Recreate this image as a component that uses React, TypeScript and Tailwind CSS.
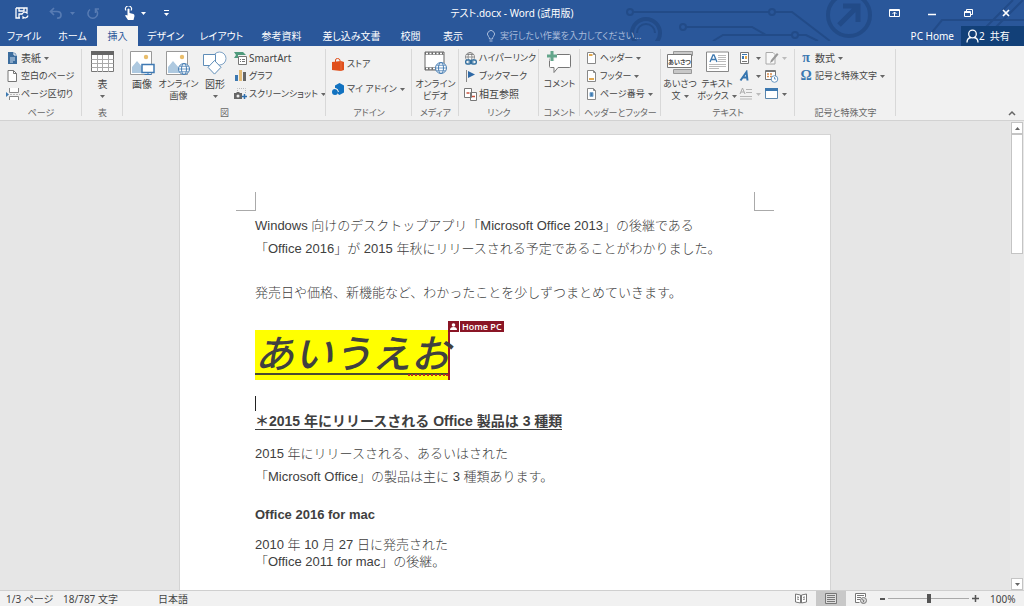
import React from "react";

type Kids = { children?: React.ReactNode };

const Caret = ({ tone = "text-[#666]" }: { tone?: string }) => (
  <svg className={`inline-block shrink-0 ${tone}`} width="5" height="3" viewBox="0 0 5 3" aria-hidden="true">
    <path d="M0 0h5L2.5 3z" fill="currentColor" />
  </svg>
);

const Icon = ({ w, h, children }: Kids & { w: number; h: number }) => (
  <svg className="shrink-0" width={w} height={h} viewBox={`0 0 ${w} ${h}`} fill="none" aria-hidden="true">
    {children}
  </svg>
);

/* ---------- ribbon drawings ---------- */

const CoverIcon = () => (
  <Icon w={12} h={12}>
    <path d="M2 0h6l3 3v9H2z" fill="#3c6d9e" />
    <path d="M8 0v3h3" stroke="#fff" />
    <path d="M4 6h5M4 8h5M4 10h3" stroke="#cfe0f0" />
  </Icon>
);
const BlankIcon = () => (
  <Icon w={12} h={12}>
    <path d="M2 .5h5.5l3 3v8H2z" fill="#fff" stroke="#777" />
    <path d="M7.500 .5v3h3" stroke="#777" />
  </Icon>
);
const BreakIcon = () => (
  <Icon w={14} h={12}>
    <path d="M3.500 0v4.500h9V0M3.500 12V8.500h9V12" fill="#fff" stroke="#888" />
    <path d="M4 6.500h10" stroke="#bbb" strokeDasharray="2 1" />
    <path d="M0 4l3 2.500L0 9z" fill="#3c78b0" />
  </Icon>
);
const TableIcon = () => (
  <Icon w={24} h={22}>
    <path d="M.5 .5h22v20H.5z" fill="#fff" stroke="#777" />
    <path d="M0 0h23v4H0z" fill="#666" />
    <path d="M.5 8.500h22M.5 12.500h22M.5 16.500h22M6.500 4v17M11.500 4v17M17.500 4v17" stroke="#aaa" />
  </Icon>
);
const Photo = () => (
  <>
    <path d="M.5 .5h21v23H.5z" fill="#fff" stroke="#999" />
    <circle cx="16" cy="6" r="2.200" fill="#e9bd6b" />
    <path d="M2 22v-6l5-6 6 7 2-1v6z" fill="#aec9e0" />
  </>
);
const Globe = ({ x, y, r = 5.5 }: { x: number; y: number; r?: number }) => (
  <g stroke="#4a80b5" fill="none">
    <circle cx={x} cy={y} r={r} fill="#fff" />
    <ellipse cx={x} cy={y} rx={r / 2.2} ry={r} />
    <path d={`M${x - r} ${y}h${2 * r}M${x - r + 1} ${y - r / 2}h${2 * r - 2}M${x - r + 1} ${y + r / 2}h${2 * r - 2}`} strokeWidth=".8" />
  </g>
);
const PictureIcon = () => (
  <Icon w={25} h={24}>
    <Photo />
    <path d="M12 13.500h12v8H12z" fill="#fff" stroke="#3f79b3" strokeWidth="1.500" />
    <path d="M18 22v1.500M14.500 23.500h7" stroke="#3f79b3" />
  </Icon>
);
const OnlinePictureIcon = () => (
  <Icon w={25} h={24}>
    <Photo />
    <Globe x={18} y={18} />
  </Icon>
);
const ShapesIcon = () => (
  <Icon w={24} h={24}>
    <circle cx="16.500" cy="7.500" r="6.500" fill="#fff" stroke="#7fa3c6" />
    <path d="M.5 3.500h12v11H.5z" fill="#fff" stroke="#5f8db8" />
    <path d="M11.500 9.500l6.500 6.800-6.500 6.800L5 16.300z" fill="#fff" stroke="#5f8db8" />
  </Icon>
);
const SmartArtIcon = () => (
  <Icon w={14} h={13}>
    <path d="M0 0h9l3 3H4v3H0l2-3z" fill="#4f9a7c" />
    <path d="M4.500 4.500h8v8h-8z" fill="#fff" stroke="#777" />
    <path d="M6 7.500h1M8 7.500h3M6 9.500h1M8 9.500h3" stroke="#777" />
  </Icon>
);
const ChartIcon = () => (
  <Icon w={14} h={12}>
    <path d="M1 5h3v6H1z" fill="#3c78b0" />
    <path d="M5 0h3v11H5z" fill="#e3bb76" />
    <path d="M9 2h3v9H9z" fill="#666" />
  </Icon>
);
const ScreenshotIcon = () => (
  <Icon w={14} h={12}>
    <path d="M3.500 3V.5h8V6" stroke="#bbb" strokeDasharray="1 1" />
    <path d="M0 5h2l1-1h2l1 1h2v6H0z" fill="#666" />
    <circle cx="4" cy="8" r="1.500" fill="#eee" />
    <path d="M10.500 6v5M8 8.500h5" stroke="#2f6fae" strokeWidth="1.500" />
  </Icon>
);
const StoreIcon = () => (
  <Icon w={12} h={13}>
    <path d="M0 4l9-1 3 1v8l-3 1-9-1z" fill="#e04f1b" />
    <path d="M3.500 4V2q0-1.500 2-1.500T8 2v1.500" stroke="#e04f1b" />
    <path d="M9 3v10" stroke="#f08458" strokeWidth=".6" />
  </Icon>
);
const AddinIcon = () => (
  <Icon w={12} h={13}>
    <path d="M3 2.500L7.500 0 12 2.500v7L7.500 12 6 11V6.500L3 5z" fill="#1272c0" />
    <circle cx="3" cy="9" r="3" fill="#1272c0" />
    <path d="M3 5.500q3 0 3.500 3.500" stroke="#f1f1f1" />
  </Icon>
);
const VideoIcon = () => (
  <Icon w={24} h={24}>
    <path d="M1 1h19v18H1z" fill="#fff" stroke="#666" strokeWidth="1" />
    <path d="M1 2.500h19M1 17.500h19" stroke="#666" strokeWidth="2.500" />
    <path d="M2 2.500h18M2 17.500h18" stroke="#fff" strokeWidth="1.500" strokeDasharray="2 1.500" />
    <Globe x={17} y={17} />
  </Icon>
);
const LinkIcon = () => (
  <Icon w={14} h={13}>
    <g stroke="#777" strokeWidth=".8">
      <circle cx="6" cy="5" r="4.500" fill="#fff" />
      <ellipse cx="6" cy="5" rx="2" ry="4.500" />
      <path d="M1.500 5h9M2.500 2.500h7" />
    </g>
    <rect x="1.700" y="8" width="5" height="4" rx="1.500" fill="#f1f1f1" stroke="#336f9f" strokeWidth="1.400" />
    <rect x="7.300" y="8" width="5" height="4" rx="1.500" fill="#f1f1f1" stroke="#336f9f" strokeWidth="1.400" />
    <path d="M4.500 10h5" stroke="#336f9f" strokeWidth="1.400" />
  </Icon>
);
const BookmarkIcon = () => (
  <Icon w={14} h={12}>
    <path d="M2.500 0v12" stroke="#888" />
    <path d="M4 1l7 3.500L4 8z" fill="#2f69a6" />
  </Icon>
);
const CrossRefIcon = () => (
  <Icon w={14} h={13}>
    <path d="M.5 .5h7v9h-7zM6.500 4.500h6v8h-6z" fill="#fff" stroke="#777" />
    <path d="M2.500 5h3M8 8.500h3" stroke="#c9523c" strokeWidth="1.500" />
  </Icon>
);
const CommentIcon = () => (
  <Icon w={25} h={24}>
    <path d="M2.500 4.500q0-1 1-1h19q1 0 1 1v11q0 1-1 1H11l-4 5v-5H3.500q-1 0-1-1z" fill="#fff" stroke="#777" />
    <path d="M5 0v10M0 5h10" stroke="#f1f1f1" strokeWidth="5" />
    <path d="M5 0v10M0 5h10" stroke="#63a58b" strokeWidth="3" />
  </Icon>
);
const HeaderIcon = ({ kind }: { kind: "head" | "foot" | "num" }) => (
  <Icon w={10} h={12}>
    <path d="M.5 .5h6l2 2v9h-8z" fill="#fff" stroke="#888" />
    <path d="M6.500 .5v2h2" stroke="#888" />
    {kind === "head" && <path d="M2 3h3.500" stroke="#e3a94f" strokeWidth="2" />}
    {kind === "foot" && <path d="M2 9h5" stroke="#e3a94f" strokeWidth="2" />}
    {kind === "num" && <path d="M3 4.500h3v4H3z" fill="#3c78b0" stroke="#7ba6cc" />}
  </Icon>
);
const GreetingIcon = () => (
  <svg className="shrink-0" width="26" height="24" viewBox="0 0 26 24" fill="none" aria-hidden="true">
    <path d="M6.500 .5h19v4h-19zM6.500 18.500h18v4h-18z" fill="#c8c8c8" stroke="#999" />
    <path d="M.5 3.500h24v13H.5z" fill="#fff" stroke="#777" />
    <text x="12.500" y="12.500" textAnchor="middle" fontSize="6" fontWeight="bold" fill="#444" fontFamily="Noto Sans CJK JP, sans-serif">
      あいさつ
    </text>
  </svg>
);
const TextBoxIcon = () => (
  <Icon w={23} h={22}>
    <path d="M.5 1h22v19.500H.5z" fill="#fff" stroke="#888" />
    <path d="M4 11l3-7h1l3 7M5 8.500h5" stroke="#3c78b0" strokeWidth="1.300" />
    <path d="M12 4.500h8M12 6.500h8M12 8.500h8M12 10.500h8M3 13.500h17M3 15.500h17M3 17.500h10" stroke="#bbb" />
  </Icon>
);
const QuickPartsIcon = () => (
  <Icon w={14} h={12}>
    <path d="M1.500 .5h8v11h-8z" fill="#fff" stroke="#777" />
    <path d="M3 2h5v1H3z" fill="#3c78b0" />
    <path d="M3 4h2v3H3z" fill="#3c78b0" />
    <path d="M6 4h2v3H6z" fill="#e3a94f" />
    <path d="M3 9.500h5" stroke="#777" />
  </Icon>
);
const WordArtIcon = () => (
  <Icon w={14} h={12}>
    <path d="M1.500 10.500L7.500 2l1 8.500M4 7.500h4.500" stroke="#3575b0" strokeWidth="2" />
  </Icon>
);
const DropCapIcon = () => (
  <Icon w={14} h={12}>
    <path d="M1 6l2.500-6L6 6M2 4h3" stroke="#aaa" />
    <path d="M7 1.500h6M7 4.500h6M1 8.500h12M1 11h12" stroke="#b5b5b5" />
  </Icon>
);
const SignatureIcon = () => (
  <Icon w={14} h={13}>
    <path d="M1 .5h7l2 2v9.500H1z" fill="#f8f8f8" stroke="#aaa" />
    <path d="M5 11l1-3 6-7 1.500 1.500-6 7z" fill="#999" />
  </Icon>
);
const DateIcon = () => (
  <Icon w={14} h={13}>
    <path d="M.5 .5h10v9H.5z" fill="#fff" stroke="#777" />
    <path d="M1 1.500h9" stroke="#777" />
    <path d="M2 4h2M5 4h2M2 6.500h2M5 6.500h2" stroke="#d88a4a" strokeWidth="1.500" />
    <circle cx="9.500" cy="9" r="3.300" fill="#fff" stroke="#6a97c2" />
    <path d="M9.500 7v2h1.500" stroke="#6a97c2" />
  </Icon>
);
const ObjectIcon = () => (
  <Icon w={14} h={12}>
    <path d="M.5 .5h12v10H.5z" fill="#fff" stroke="#5a86ad" />
    <path d="M0 0h13v3H0z" fill="#3c78b0" />
  </Icon>
);

/* ---------- ribbon building blocks ---------- */

const Group = ({ width, label, children }: Kids & { width: string; label: string }) => (
  <section
    aria-label={label}
    className={`relative flex shrink-0 flex-col whitespace-nowrap pt-[3px] after:absolute after:right-0 after:top-[3px] after:bottom-1 after:w-px after:bg-[#d8d8d8] ${width}`}
  >
    <div className="flex h-[54px] shrink-0">{children}</div>
    <h2 className="shrink-0 pt-[2px] text-center text-[9px] leading-4 text-[#666]">{label}</h2>
  </section>
);

const Small = ({
  icon,
  caret,
  tone,
  dense,
  children,
  gap = "gap-[3px]",
}: Kids & { icon: React.ReactNode; caret?: boolean; tone?: string; dense?: boolean; gap?: string }) => (
  <button type="button" className={`flex h-[18px] items-center gap-[3px] ${dense ? "text-[9px]" : "text-[10px]"}`}>
    <span className={`flex items-center ${gap}`}>
      {icon}
      {children}
    </span>
    {caret && <Caret tone={tone} />}
  </button>
);

const Big = ({
  icon,
  lines,
  caret,
  dense,
  width,
}: {
  icon: React.ReactNode;
  lines: string[];
  caret?: boolean;
  dense?: boolean;
  width: string;
}) => (
  <button
    type="button"
    className={`flex shrink-0 flex-col items-center pt-[2px] ${dense ? "text-[9px]" : "text-[10px]"} ${width}`}
  >
    <span className="flex h-[27px] items-start">{icon}</span>
    <span className="leading-3">{lines[0]}</span>
    {(lines[1] || caret) && (
      <span className="flex h-3 items-center gap-[3px] leading-3">
        {lines[1]}
        {caret && <Caret />}
      </span>
    )}
  </button>
);

const tabs: [string, string][] = [
  ["ファイル", "w-12"],
  ["ホーム", "w-[49px]"],
  ["挿入", "w-[41px]"],
  ["デザイン", "w-[55px]"],
  ["レイアウト", "w-[57px]"],
  ["参考資料", "w-[63px]"],
  ["差し込み文書", "w-[77px]"],
  ["校閲", "w-[41px]"],
  ["表示", "w-11"],
];

const Circuit = () => (
  <svg className="absolute right-0 top-0" width="404" height="41" viewBox="620 0 404 41" fill="none" stroke="#224b88" strokeWidth="2" aria-hidden="true">
    <circle cx="630" cy="12" r="3" />
    <path d="M633 12h136M775 12h17l38 29" />
    <circle cx="772" cy="12" r="3" />
    <circle cx="683" cy="27" r="3" />
    <path d="M686 27h66l14 8M713 41l10-6h69M798 35h8l12 6" />
    <circle cx="795" cy="35" r="3" />
    <circle cx="646" cy="33" r="14" strokeWidth="4" />
    <path d="M637 33a9 9 0 0 1 18 0" />
    <circle cx="849" cy="15" r="21" strokeWidth="4" />
    <path d="M839 25l19-19M843 6h15v16" strokeWidth="5" />
    <path d="M925 41l17-21h82M985 28l28-28M995 28l28-28" />
  </svg>
);

const TitleBar = () => (
  <div className="relative grid h-[26px] grid-cols-[1fr_auto_1fr] items-center">
    <div className="flex items-center pl-[15px]">
      <button type="button" aria-label="上書き保存">
        <Icon w={14} h={14}>
          <path d="M1 2h11v3M1 2v10h4M4 2v3h5V2M4 12V8h3" stroke="#fff" strokeWidth="1.300" />
          <path d="M7 8.500a3 3 0 0 1 5-1.500V5M13 9.500a3 3 0 0 1-5 1.500v2" stroke="#fff" strokeWidth="1.200" />
        </Icon>
      </button>
      <button type="button" aria-label="元に戻す" className="ml-5 flex items-center gap-2">
        <Icon w={13} h={12}>
          <path d="M5 1L1.500 4.500 5 8M2 4.500h6q4 0 4 3.500t-4 3" stroke="#577bb3" strokeWidth="1.700" />
        </Icon>
        <Caret tone="text-[#577bb3]" />
      </button>
      <button type="button" aria-label="やり直し" className="ml-3">
        <Icon w={12} h={12}>
          <path d="M3 2.500a4.800 4.800 0 1 0 5.500 0M8.500 6V2h3.500" stroke="#577bb3" strokeWidth="1.500" />
        </Icon>
      </button>
      <button type="button" aria-label="タッチ/マウス モードの切り替え" className="ml-[25px] flex items-center gap-[6px]">
        <Icon w={11} h={14}>
          <path d="M2 4.500a3 3 0 1 1 5 0" stroke="#fff" strokeWidth="1.200" />
          <path d="M3.500 3q1-1 2 0v4l4 1q1 .5 1 2l-1 4H4L1 9.500q1-1 2.500 0z" fill="#fff" />
        </Icon>
        <Caret tone="text-white" />
      </button>
      <button type="button" aria-label="クイック アクセス ツール バーのユーザー設定" className="ml-[18px]">
        <Icon w={5} h={6}>
          <path d="M0 .5h5" stroke="#fff" />
          <path d="M0 3h5L2.500 6z" fill="#fff" />
        </Icon>
      </button>
    </div>
    <h1 className="text-[10px]">テスト.docx - Word (試用版)</h1>
    <div className="flex justify-end">
      <button type="button" aria-label="リボンの表示オプション" className="flex h-6 w-[37px] items-center justify-center">
        <Icon w={11} h={8}>
          <path d="M.5 .5h10v7H.5zM1 1.500h9" stroke="#fff" />
          <path d="M5.500 3v4M3.500 5l2-2 2 2" stroke="#fff" />
        </Icon>
      </button>
      <button type="button" aria-label="最小化" className="flex h-6 w-[37px] items-center justify-center">
        <Icon w={8} h={8}>
          <path d="M0 5.500h8" stroke="#fff" strokeWidth="1.500" />
        </Icon>
      </button>
      <button type="button" aria-label="元に戻す (縮小)" className="flex h-6 w-[37px] items-center justify-center">
        <Icon w={9} h={8}>
          <path d="M2.500 2V.5h6v5H7" stroke="#fff" />
          <path d="M.5 2.500h6v5h-6zM1 3.500h5" stroke="#fff" />
        </Icon>
      </button>
      <button type="button" aria-label="閉じる" className="flex h-6 w-[37px] items-center justify-center">
        <Icon w={8} h={8}>
          <path d="M1 1l6 6M7 1L1 7" stroke="#fff" strokeWidth="1.700" />
        </Icon>
      </button>
    </div>
  </div>
);

const TabRow = () => (
  <div className="relative flex h-5 text-[10px]">
    <nav className="flex shrink-0">
      {tabs.map(([name, width]) => (
        <button
          key={name}
          type="button"
          className={`whitespace-nowrap ${width} ${name === "挿入" ? "bg-[#f1f1f1] text-[#2a579a]" : "text-white"}`}
        >
          {name}
        </button>
      ))}
    </nav>
    <label className="ml-[11px] flex min-w-0 flex-1 items-center gap-1">
      <Icon w={10} h={13}>
        <path d="M3.500 9q0-1.500-1-2.500a3.500 3.500 0 1 1 5 0q-1 1-1 2.500zM3.500 11h3" stroke="#a9bcdb" />
      </Icon>
      <input
        aria-label="操作アシスト"
        placeholder="実行したい作業を入力してください..."
        className="w-full max-w-[180px] bg-transparent text-[9px] outline-none placeholder:text-[#a9bcdb]"
      />
    </label>
    <button type="button" className="px-[7px] whitespace-nowrap">
      PC Home
    </button>
    <button type="button" className="flex w-[63px] shrink-0 items-center gap-[5px] bg-[#124078] pl-[5px]">
      <span className="flex items-center">
        <Icon w={13} h={14}>
          <circle cx="6.500" cy="5" r="3.800" stroke="#fff" strokeWidth="1.300" />
          <path d="M1 13.500q0-4.500 4-5M12 13.500q0-4.500-4-5" stroke="#fff" strokeWidth="1.300" />
        </Icon>
        2
      </span>
      <span>共有</span>
    </button>
  </div>
);

const Symbol = ({ children }: Kids) => (
  <span className="w-3 text-center text-[14px] leading-4 font-bold text-[#3c78b0] [font-family:'Liberation_Serif',serif]">
    {children}
  </span>
);

const Ribbon = () => (
  <div className="relative flex h-[75px] shrink-0 border-b border-[#d2d2d2] bg-[#f1f1f1] text-[#444]">
    <Group width="w-[82px]" label="ページ">
      <div className="flex flex-col items-start pl-[6px]">
        <Small icon={<CoverIcon />} caret>表紙</Small>
        <Small icon={<BlankIcon />} dense>空白のページ</Small>
        <Small icon={<BreakIcon />} gap="gap-px" dense>ページ区切り</Small>
      </div>
    </Group>
    <Group width="w-[41px]" label="表">
      <Big width="w-full" icon={<TableIcon />} lines={["表"]} caret />
    </Group>
    <Group width="w-[203px]" label="図">
      <Big width="w-[38px]" icon={<PictureIcon />} lines={["画像"]} />
      <Big width="w-[35px]" icon={<OnlinePictureIcon />} lines={["オンライン", "画像"]} dense />
      <Big width="w-[38px]" icon={<ShapesIcon />} lines={["図形"]} caret />
      <div className="flex flex-col items-start">
        <Small icon={<SmartArtIcon />} gap="gap-px">SmartArt</Small>
        <Small icon={<ChartIcon />} gap="gap-px" dense>グラフ</Small>
        <Small icon={<ScreenshotIcon />} gap="gap-px" caret dense>スクリーンショット</Small>
      </div>
    </Group>
    <Group width="w-[86px]" label="アドイン">
      <div className="flex flex-col items-start gap-[7px] pl-[6px] pt-[6px]">
        <Small icon={<StoreIcon />} dense>ストア</Small>
        <Small icon={<AddinIcon />} caret dense>マイ アドイン</Small>
      </div>
    </Group>
    <Group width="w-[47px]" label="メディア">
      <Big width="w-full" icon={<VideoIcon />} lines={["オンライン", "ビデオ"]} dense />
    </Group>
    <Group width="w-20" label="リンク">
      <div className="flex flex-col items-start pl-[5px]">
        <Small icon={<LinkIcon />} gap="gap-px" dense>ハイパーリンク</Small>
        <Small icon={<BookmarkIcon />} gap="gap-px" dense>ブックマーク</Small>
        <Small icon={<CrossRefIcon />} gap="gap-px">相互参照</Small>
      </div>
    </Group>
    <Group width="w-[41px]" label="コメント">
      <Big width="w-full" icon={<CommentIcon />} lines={["コメント"]} dense />
    </Group>
    <Group width="w-[81px]" label="ヘッダーとフッター">
      <div className="flex flex-col items-start pl-[7px]">
        <Small icon={<HeaderIcon kind="head" />} caret dense>ヘッダー</Small>
        <Small icon={<HeaderIcon kind="foot" />} caret dense>フッター</Small>
        <Small icon={<HeaderIcon kind="num" />} caret dense>ページ番号</Small>
      </div>
    </Group>
    <Group width="w-[134px]" label="テキスト">
      <Big width="w-[38px]" icon={<GreetingIcon />} lines={["あいさつ", "文"]} caret dense />
      <Big width="w-[36px]" icon={<TextBoxIcon />} lines={["テキスト", "ボックス"]} caret dense />
      <div className="flex flex-col pl-1">
        <Small icon={<QuickPartsIcon />} caret />
        <Small icon={<WordArtIcon />} caret />
        <Small icon={<DropCapIcon />} caret tone="text-[#bbb]" />
      </div>
      <div className="flex flex-col pl-1">
        <Small icon={<SignatureIcon />} caret tone="text-[#bbb]" />
        <Small icon={<DateIcon />} />
        <Small icon={<ObjectIcon />} caret />
      </div>
    </Group>
    <Group width="w-[101px]" label="記号と特殊文字">
      <div className="flex flex-col items-start pl-[5px]">
        <Small icon={<Symbol>π</Symbol>} caret>数式</Small>
        <Small icon={<Symbol>Ω</Symbol>} caret dense>記号と特殊文字</Small>
      </div>
    </Group>
    <button type="button" aria-label="リボンを折りたたむ" className="ml-auto flex items-end pb-1 pr-2">
      <Icon w={8} h={6}>
        <path d="M1 5l3-3 3 3" stroke="#666" strokeWidth="1.500" />
      </Icon>
    </button>
  </div>
);

const Document = () => (
  <main className="flex min-w-0 flex-1 justify-center overflow-hidden pt-[13px]">
    <article className="h-[900px] w-full max-w-[652px] border border-[#d4d4d4] bg-white pt-[57px] text-[13px] text-[#404040]">
      <div className="flex justify-between px-14">
        <span className="h-[19px] w-5 border-r border-b border-[#aaa]" />
        <span className="h-[19px] w-5 border-l border-b border-[#aaa]" />
      </div>
      <div className="px-[75px] pt-[3px] leading-[23px] font-light">
        <p>
          Windows 向けのデスクトップアプリ「Microsoft Office 2013」の後継である
          <br />
          「Office 2016」が 2015 年秋にリリースされる予定であることがわかりました。
        </p>
        <p className="mt-[21px]">発売日や価格、新機能など、わかったことを少しずつまとめていきます。</p>
        <p className="relative mt-[26px] h-[50px] w-[195px] border-r-2 border-[#a01828] bg-[#ffff00] text-[39px] leading-[50px] font-medium whitespace-nowrap italic">
          あいうえお
          <span className="absolute bottom-[5px] left-0 w-full border-b-2 border-[#4a4a30]" />
          <span className="absolute right-0 bottom-1 w-10 border-b-2 border-dotted border-[#c03020]" />
          <span className="absolute -top-[9px] left-[193px] flex h-[11px] gap-px text-[9px] leading-[11px] font-semibold text-white not-italic [font-family:'Open_Sans','Noto_Sans',sans-serif]">
            <span className="flex w-[11px] items-center justify-center bg-[#8a1525]">
              <Icon w={7} h={7}>
                <circle cx="3.500" cy="2" r="1.800" fill="#fff" />
                <path d="M0 7q0-3 3.500-3T7 7z" fill="#fff" />
              </Icon>
            </span>
            <span className="bg-[#8a1525] px-[2px]">Home PC</span>
          </span>
        </p>
        <div className="mt-4 h-[15px] w-px bg-[#222]" />
        <h2 className="text-[14px] leading-5 font-bold">
          <span className="border-b border-[#404040]">＊2015 年にリリースされる Office 製品は 3 種類</span>
        </h2>
        <p className="mt-[11px]">
          2015 年にリリースされる、あるいはされた
          <br />
          「Microsoft Office」の製品は主に 3 種類あります。
        </p>
        <h3 className="mt-[15px] font-bold">Office 2016 for mac</h3>
        <p className="mt-[10px] leading-[17px]">
          2010 年 10 月 27 日に発売された
          <br />
          「Office 2011 for mac」の後継。
        </p>
      </div>
    </article>
  </main>
);

const ScrollBar = () => (
  <div className="flex w-[14px] shrink-0 flex-col items-center bg-[#e9e9e9] px-px pt-px">
    <button type="button" aria-label="上へスクロール" className="flex h-3 w-full items-center justify-center border border-[#c4c4c4] bg-white">
      <Icon w={5} h={3}>
        <path d="M0 3h5L2.500 0z" fill="#666" />
      </Icon>
    </button>
    <div className="w-full flex-1">
      <div className="h-[27%] w-full border border-[#c4c4c4] bg-white" />
    </div>
    <button type="button" aria-label="下へスクロール" className="flex h-3 w-full items-center justify-center border border-[#c4c4c4] bg-white">
      <Caret />
    </button>
  </div>
);

const StatusBar = () => (
  <footer className="flex h-4 shrink-0 items-stretch border-t border-[#cfcfcf] bg-[#f1f1f1] text-[10px] leading-4 whitespace-nowrap text-[#444]">
    <span className="w-[63px] pl-[6px]">1/3 ページ</span>
    <span className="w-[95px]">18/787 文字</span>
    <span>日本語</span>
    <div className="ml-auto flex items-stretch">
      <button type="button" aria-label="閲覧モード" className="flex w-[30px] items-center justify-center">
        <Icon w={12} h={11}>
          <path d="M.5 1l5 1v8l-5-1zM11.500 1l-5 1v8l5-1z" fill="#fff" stroke="#777" />
          <path d="M2 4l2 .4M2 6l2 .4M8 4.400l2-.4M8 6.400l2-.4" stroke="#777" />
        </Icon>
      </button>
      <button type="button" aria-label="印刷レイアウト" className="flex w-[30px] items-center justify-center bg-[#c8c8c8]">
        <Icon w={12} h={11}>
          <path d="M.5 .5h11v10H.5z" fill="#ddd" stroke="#777" />
          <path d="M2 2.500h8M2 4.500h8M2 6.500h8M2 8.500h8" stroke="#777" />
        </Icon>
      </button>
      <button type="button" aria-label="Web レイアウト" className="flex w-[30px] items-center justify-center">
        <Icon w={12} h={11}>
          <path d="M10.500 4V.5H.5v9h4" fill="#fff" stroke="#777" />
          <path d="M2 2.500h7M2 4.500h4M2 6.500h3" stroke="#777" />
          <circle cx="8.500" cy="7.500" r="3" fill="#ddd" stroke="#777" />
          <path d="M7 6.500l2 1-1 2" stroke="#777" />
        </Icon>
      </button>
      <button type="button" aria-label="縮小" className="flex w-3 items-center justify-center">
        <span className="h-[2px] w-[5px] bg-[#555]" />
      </button>
      <input
        type="range"
        aria-label="ズーム"
        min={0}
        max={100}
        defaultValue={50}
        className="w-[81px] appearance-none bg-transparent [&::-webkit-slider-runnable-track]:h-[9px] [&::-webkit-slider-runnable-track]:bg-[linear-gradient(#aaa,#aaa)] [&::-webkit-slider-runnable-track]:bg-[length:100%_1px] [&::-webkit-slider-runnable-track]:bg-center [&::-webkit-slider-runnable-track]:bg-no-repeat [&::-webkit-slider-thumb]:h-[9px] [&::-webkit-slider-thumb]:w-[4px] [&::-webkit-slider-thumb]:appearance-none [&::-webkit-slider-thumb]:bg-[#555]"
      />
      <button type="button" aria-label="拡大" className="flex w-3 items-center justify-center">
        <Icon w={7} h={7}>
          <path d="M3.500 0v7M0 3.500h7" stroke="#555" strokeWidth="1.500" />
        </Icon>
      </button>
      <span className="w-[43px] pl-[9px]">100%</span>
    </div>
  </footer>
);

export default function App() {
  return (
    <div className="flex h-screen flex-col overflow-hidden bg-[#e6e6e6] [font-family:'Noto_Sans','Noto_Sans_CJK_JP',sans-serif] [font-feature-settings:'palt']">
      <header className="relative shrink-0 bg-[#2a579a] text-white">
        <Circuit />
        <TitleBar />
        <TabRow />
      </header>
      <Ribbon />
      <div className="flex min-h-0 flex-1 [font-family:'Liberation_Sans','Noto_Sans_CJK_JP',sans-serif] [font-feature-settings:normal]">
        <Document />
        <ScrollBar />
      </div>
      <StatusBar />
    </div>
  );
}
